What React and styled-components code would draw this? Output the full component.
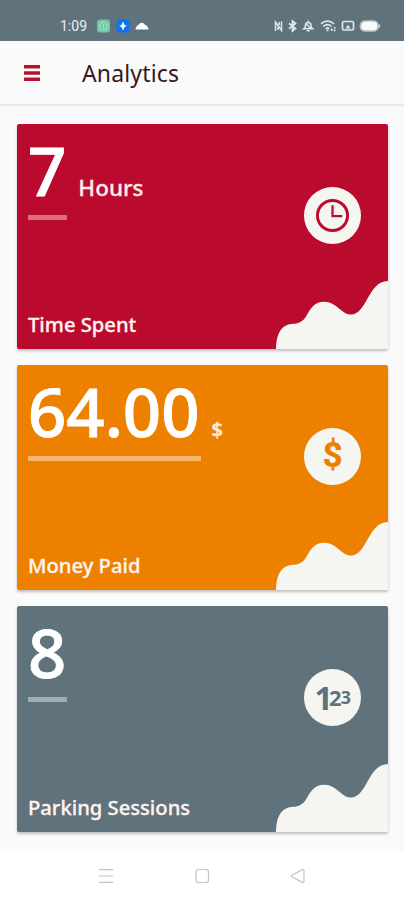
import React from "react";
import styled, { createGlobalStyle } from "styled-components";

const cards = [
    { id: "time", value: "7", unit: "Hours", label: "Time Spent", color: "#ba0a2d", bar: 39 },
    { id: "money", value: "64.00", unit: "$", label: "Money Paid", color: "#ee8000", bar: 173 },
    { id: "parking", value: "8", unit: "", label: "Parking Sessions", color: "#60727b", bar: 39 },
];

// status bar icons
const StatusLeft = () => (
    <svg width="52" height="14" viewBox="0 0 52 14">
        <rect x="0" y="0.5" width="13" height="13" rx="3" fill="#6fc9a6" />
        <rect x="3" y="3.5" width="7" height="7" rx="2.500" fill="none" stroke="#b4e5d2" />
        <path d="M6.500 5v4" stroke="#b4e5d2" />
        <rect x="19.500" y="0.5" width="13" height="13" rx="3" fill="#0c74f0" />
        <path d="M26 2.500 27.500 6l2.500 1L27.500 8l-1.500 3.500L24.500 8 22 7l2.500-1z" fill="#fff" />
        <path d="M38.500 10.500C38.500 8.500 40 6.600 41.500 5.800C43.300 3 46 3 47.800 5.500C50 6.500 51.500 8.500 51.500 10.500z" fill="#fff" />
    </svg>
);

const StatusRight = () => (
    <svg width="108" height="14" viewBox="0 0 108 14" fill="none" stroke="#dfe9ed" strokeWidth="1.7">
        <path d="M2.500 12V3l6 8.500V2.500M5 11V8M6.200 3v3" strokeWidth="1.500" />
        <path d="m16 4.300 6.500 5.200-3 2.500V2l3 2.500L16 9.700" />
        <path d="M31 9.700h8.500c-1.300-1-1.500-2-1.500-3.400 0-3.700-5.500-3.700-5.500 0 0 1.400 0 2.400-1.500 3.400zM33.800 11.700h2.800M35.200 1.500v2M32.500 4l5 5" strokeWidth="1.500" />
        <path d="M48 4.800c4-3.300 9-3.300 13 0M50.300 7.300c2.600-2 5.900-2 8.300 0M52.700 9.600c1.200-.8 2.500-.8 3.600 0M53.500 11.400h2M58.700 9.500v2.500M61.700 8v1.600M61.700 10.600v1.600" />
        <rect x="69.500" y="2.500" width="11" height="8.500" rx="1.500" />
        <path d="M72.500 9.500h5L75 5.800z" fill="#dfe9ed" stroke="none" />
        <rect x="87.500" y="2" width="17.500" height="10" rx="4.500" fill="#f8fafa" stroke="#b8c3c8" />
        <path d="M106.300 5.500v3" stroke="#cbd5d9" />
    </svg>
);

const Wave = () => (
    <WaveSvg width="112" height="68" viewBox="0 0 112 69" preserveAspectRatio="none">
        <path
            d="M0 69C.2 61 1.200 55 4.500 50C8 45.500 12 44 17 43.500C23 43 27 41 30 36C34 29 38 21 48 21C61 21 65 34 75 34C91 34 92 0 112 0V69Z"
            fill="#f5f6f2"
        />
    </WaveSvg>
);

const CardIcon = ({ id, color }) => {
    if (id === "time") {
        return (
            <svg width="35" height="35" viewBox="0 0 36 36" fill="none" stroke={color} strokeWidth="3">
                <circle cx="18" cy="18" r="15.500" />
                <path d="M18 7.500V18.700H28" strokeWidth="2.300" />
            </svg>
        );
    }
    if (id === "money") {
        return <Dollar $color={color}>$</Dollar>;
    }
    return (
        <Digits $color={color}>
            <Digit $size={32} $tight={3.8}>1</Digit>
            <Digit $size={22} $tight={0.8} $up={6}>2</Digit>
            <Digit $size={18} $tight={0.5} $up={8}>3</Digit>
        </Digits>
    );
};

const App = () => {
    return (
        <>
            <GlobalStyle />
            <Phone>
                <StatusBar>
                    <Time>1:09</Time>
                    <StatusLeft />
                    <Spacer />
                    <StatusRight />
                </StatusBar>
                <Header>
                    <svg width="16" height="16" viewBox="0 0 16 16" fill="#b3142b">
                        <path d="M0 0h16v3.500H0zM0 6.200h16v3.500H0zM0 12.400h16v3.500H0z" />
                    </svg>
                    <Title>Analytics</Title>
                </Header>
                <Content>
                    {cards.map((item) => (
                        <Card key={item.id} $color={item.color}>
                            <ValueRow>
                                <Value>{item.value}</Value>
                                {item.unit && <Unit $small={item.unit === "$"}>{item.unit}</Unit>}
                            </ValueRow>
                            <Underline $width={item.bar} />
                            <Label>{item.label}</Label>
                            <Wave />
                            <IconCircle>
                                <CardIcon id={item.id} color={item.color} />
                            </IconCircle>
                        </Card>
                    ))}
                </Content>
                {/* android navigation */}
                <NavBar>
                    <svg width="208" height="16" viewBox="0 0 208 16" fill="none" stroke="#c4c4c4" strokeWidth="1.200">
                        <path d="M1 1.600h14M1 8h14M1 14.400h14" />
                        <rect x="98" y="1.500" width="12.500" height="13" rx="2.500" />
                        <path d="M193.800 7.200 204.500 1.600c.8-.4 1.500 0 1.500.9v11c0 .9-.7 1.300-1.500.9L193.800 8.800c-.8-.5-.8-1.100 0-1.600z" />
                    </svg>
                </NavBar>
            </Phone>
        </>
    );
};

const GlobalStyle = createGlobalStyle`
    * {
        box-sizing: border-box;
    }
    body {
        margin: 0;
        background: #fafafa;
        font-family: "Noto Sans", "Open Sans", sans-serif;
    }
`;
const Phone = styled.div`
    display: flex;
    flex-direction: column;
    width: 404px;
    height: 900px;
    overflow: hidden;
    background: #fafafa;
`;
const StatusBar = styled.div`
    display: flex;
    align-items: center;
    flex-shrink: 0;
    height: 41px;
    padding: 11px 23px 0 60px;
    background: #60727b;
`;
const Time = styled.span`
    width: 37px;
    color: #e9eff1;
    font-family: Roboto, sans-serif;
    font-size: 14px;
    line-height: 14px;
`;
const Spacer = styled.div`
    flex: 1;
`;
const Header = styled.header`
    display: flex;
    align-items: center;
    flex-shrink: 0;
    height: 65px;
    padding-left: 24px;
    border-bottom: 2px solid #e9e9ea;
`;
const Title = styled.h1`
    margin: 0 0 0 42px;
    color: #35191f;
    font-size: 23px;
    font-weight: 400;
    line-height: 30px;
    letter-spacing: 0.15px;
`;
const Content = styled.main`
    display: flex;
    flex: 1;
    flex-direction: column;
    gap: 16px;
    padding: 17.5px 16px 0 17px;
`;
const Card = styled.section`
    position: relative;
    display: flex;
    flex-direction: column;
    flex-shrink: 0;
    height: 225.4px;
    padding: 8px 11px 10px;
    border-radius: 2px;
    background: ${(props) => props.$color};
    box-shadow: 0 2px 3px rgba(0, 0, 0, 0.24);
    color: #fff;
`;
const ValueRow = styled.div`
    display: flex;
    align-items: baseline;
    height: 83px;
`;
const Value = styled.span`
    font-size: 67px;
    font-weight: 500;
    line-height: 76px;
    -webkit-text-stroke: 0.9px #fff;
`;
const Unit = styled.span`
    margin-left: 12px;
    color: #fdebe8;
    font-size: ${(props) => (props.$small ? 20 : 22.5)}px;
    font-weight: ${(props) => (props.$small ? 600 : 500)};
    line-height: 30px;
    -webkit-text-stroke: 0.3px #fdebe8;
`;
const Underline = styled.div`
    width: ${(props) => props.$width}px;
    height: 5px;
    background: rgba(255, 255, 255, 0.42);
`;
const Label = styled.div`
    margin-top: auto;
    color: #fff3ee;
    font-size: 20.2px;
    font-weight: 500;
    line-height: 30px;
    -webkit-text-stroke: 0.3px #fff3ee;
`;
const WaveSvg = styled.svg`
    position: absolute;
    right: 0;
    bottom: 0;
`;
const IconCircle = styled.div`
    position: absolute;
    top: 63px;
    right: 27px;
    display: flex;
    align-items: center;
    justify-content: center;
    width: 57px;
    height: 57px;
    border-radius: 50%;
    background: #f5f6f2;
`;
const Dollar = styled.span`
    color: ${(props) => props.$color};
    font-family: Roboto, sans-serif;
    font-size: 35px;
    font-weight: 800;
    line-height: 58px;
`;
const Digits = styled.div`
    display: flex;
    align-items: flex-end;
    color: ${(props) => props.$color};
`;
const Digit = styled.span`
    margin-bottom: ${(props) => props.$up || 0}px;
    font-size: ${(props) => props.$size}px;
    font-weight: 700;
    line-height: 1;
    letter-spacing: -${(props) => props.$tight}px;
`;
const NavBar = styled.nav`
    display: flex;
    align-items: center;
    justify-content: center;
    flex-shrink: 0;
    height: 49px;
    background: #fff;
`;

export default App;
